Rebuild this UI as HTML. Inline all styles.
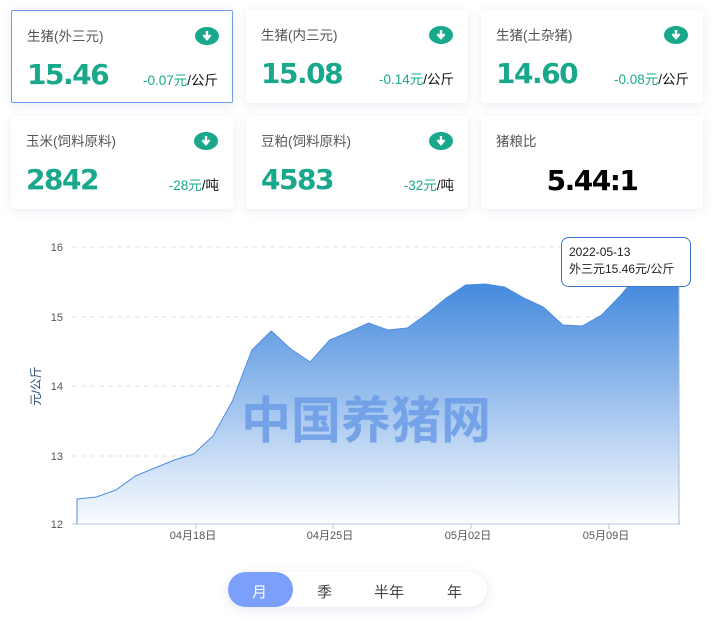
<!DOCTYPE html>
<html><head><meta charset="utf-8"><style>
*{margin:0;padding:0;box-sizing:border-box}
body{width:714px;height:619px;background:#fff;font-family:"Liberation Sans","Noto Sans CJK SC",sans-serif;position:relative;overflow:hidden}
.card{position:absolute;width:222px;height:93px;background:#fff;border-radius:4px;box-shadow:0 2px 10px rgba(120,130,170,0.15)}
.card.sel{border:1px solid #6d9eea;border-radius:2px}
.t{position:absolute;left:15px;top:14px;font-size:13.5px;color:#555}
.v{position:absolute;left:15px;top:47px;font-size:28px;font-weight:bold;color:#1aa88c;font-family:"DejaVu Sans",sans-serif;letter-spacing:-1.5px}
.c{position:absolute;right:14px;top:58px;font-size:13.5px;color:#1aa88c}
.c b{font-weight:normal;color:#111}
.ic{position:absolute;left:183px;top:16px;width:24px;height:18px;border-radius:50%;background:#1aa88c}
.ic svg{position:absolute;left:6px;top:3px}
.tab{position:absolute;font-size:15px;color:#444;top:581px}
</style></head><body>
<div class="card sel" style="left:11px;top:10px"><div class="t">生猪(外三元)</div><div class="ic"><svg width="12" height="12" viewBox="0 0 12 12"><path d="M6 1v7M2.5 5L6 9l3.5-4" stroke="#fff" stroke-width="2.4" fill="none"/></svg></div><div class="v">15.46</div><div class="c">-0.07元<b>/公斤</b></div></div>
<div class="card" style="left:246px;top:10px"><div class="t">生猪(内三元)</div><div class="ic"><svg width="12" height="12" viewBox="0 0 12 12"><path d="M6 1v7M2.5 5L6 9l3.5-4" stroke="#fff" stroke-width="2.4" fill="none"/></svg></div><div class="v">15.08</div><div class="c">-0.14元<b>/公斤</b></div></div>
<div class="card" style="left:481px;top:10px"><div class="t">生猪(土杂猪)</div><div class="ic"><svg width="12" height="12" viewBox="0 0 12 12"><path d="M6 1v7M2.5 5L6 9l3.5-4" stroke="#fff" stroke-width="2.4" fill="none"/></svg></div><div class="v">14.60</div><div class="c">-0.08元<b>/公斤</b></div></div>
<div class="card" style="left:11px;top:116px"><div class="t">玉米(饲料原料)</div><div class="ic"><svg width="12" height="12" viewBox="0 0 12 12"><path d="M6 1v7M2.5 5L6 9l3.5-4" stroke="#fff" stroke-width="2.4" fill="none"/></svg></div><div class="v">2842</div><div class="c">-28元<b>/吨</b></div></div>
<div class="card" style="left:246px;top:116px"><div class="t">豆粕(饲料原料)</div><div class="ic"><svg width="12" height="12" viewBox="0 0 12 12"><path d="M6 1v7M2.5 5L6 9l3.5-4" stroke="#fff" stroke-width="2.4" fill="none"/></svg></div><div class="v">4583</div><div class="c">-32元<b>/吨</b></div></div>
<div class="card" style="left:481px;top:116px"><div class="t">猪粮比</div><div class="v" style="left:0;width:222px;text-align:center;color:#000;font-size:28px;top:48px">5.44:1</div></div>

<svg style="position:absolute;left:0;top:0" width="714" height="619">
<defs><linearGradient id="g" x1="0" y1="270" x2="0" y2="524" gradientUnits="userSpaceOnUse"><stop offset="0" stop-color="#3a83db"/><stop offset="1" stop-color="#fafcff"/></linearGradient></defs>
<g stroke="#dde0e6" stroke-dasharray="5,4" stroke-width="1"><line x1="72" y1="247" x2="680" y2="247"/><line x1="72" y1="317" x2="680" y2="317"/><line x1="72" y1="386" x2="680" y2="386"/><line x1="72" y1="456" x2="680" y2="456"/></g>
<g font-size="11" fill="#555" text-anchor="end" font-family="Liberation Sans"><text x="63" y="251">16</text><text x="63" y="321">15</text><text x="63" y="390">14</text><text x="63" y="460">13</text><text x="63" y="528">12</text></g>
<text transform="translate(40,386) rotate(-90)" text-anchor="middle" font-size="12" fill="#2d4a7a">元/公斤</text>
<path d="M77 499 L96.4 497 L115.9 490 L135.3 476 L154.7 468 L174.2 460 L193.6 454 L213 436 L232.4 401 L251.9 350 L271.3 331 L290.7 349 L310.2 362 L329.6 340 L349 332 L368.5 323 L387.9 330 L407.3 328 L426.7 314 L446.2 298 L465.6 285 L485 284 L504.5 287 L523.9 298 L543.3 307 L562.8 325 L582.2 326 L601.6 315 L621 295 L640.5 271 L659.9 278 L679 283 L679 524 L77 524Z" fill="url(#g)" stroke="#4f8ee0" stroke-width="1"/>
<line x1="72" y1="524" x2="680" y2="524" stroke="#b9c8dc"/>
<line x1="679" y1="283" x2="679" y2="524" stroke="#aab8cc"/>
<g stroke="#b9c8dc"><line x1="196" y1="524" x2="196" y2="529"/><line x1="333" y1="524" x2="333" y2="529"/><line x1="471" y1="524" x2="471" y2="529"/><line x1="609" y1="524" x2="609" y2="529"/></g>
<g font-size="11" fill="#555" text-anchor="middle"><text x="193" y="539">04月18日</text><text x="330" y="539">04月25日</text><text x="468" y="539">05月02日</text><text x="606" y="539">05月09日</text></g>
<text x="366" y="438" text-anchor="middle" font-size="50" font-weight="bold" fill="#6b9be6" fill-opacity="0.85" font-family="Noto Sans CJK SC">中国养猪网</text>
<rect x="561.5" y="237.5" width="129" height="49" rx="7" fill="#fff" stroke="#3a78d4"/>
<text x="569" y="256" font-size="12" fill="#222">2022-05-13</text>
<text x="569" y="273" font-size="12" fill="#222">外三元15.46元/公斤</text>
</svg>

<div style="position:absolute;left:228px;top:572px;width:259px;height:35px;border-radius:18px;background:#fff;box-shadow:0 2px 10px rgba(120,130,180,0.2)"></div>
<div style="position:absolute;left:228px;top:572px;width:65px;height:35px;border-radius:18px;background:#7b9ffb"></div>
<div class="tab" style="left:252px;color:#fff">月</div>
<div class="tab" style="left:317px">季</div>
<div class="tab" style="left:374px">半年</div>
<div class="tab" style="left:447px">年</div>
</body></html>
